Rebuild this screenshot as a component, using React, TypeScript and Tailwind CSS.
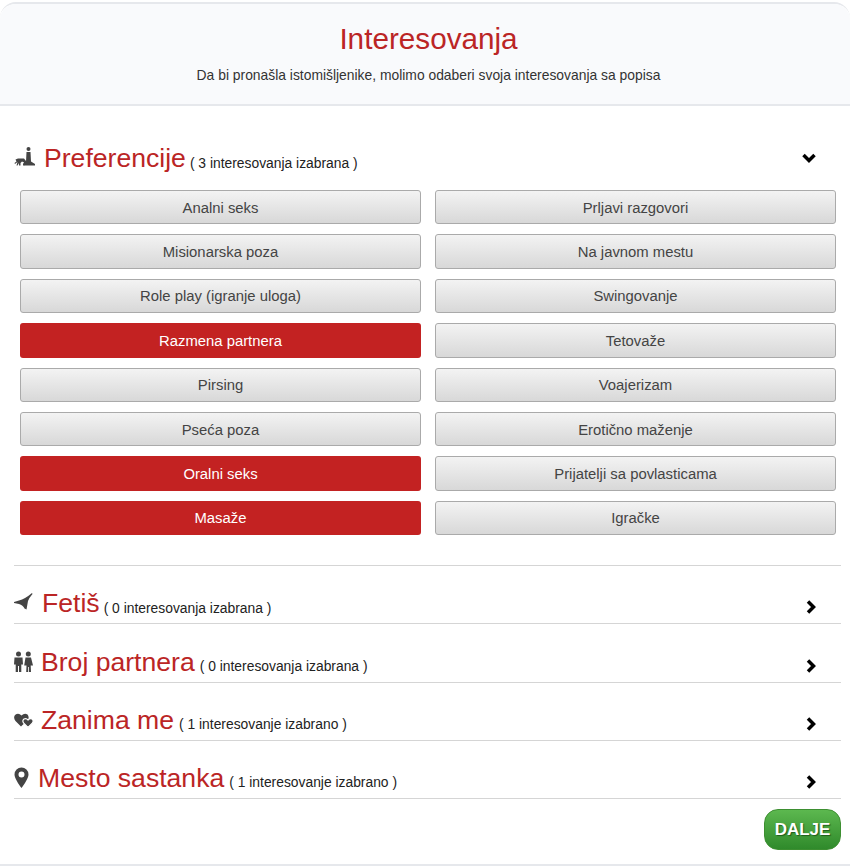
import React from 'react';

const left: [string, boolean][] = [
  ['Analni seks', false],
  ['Misionarska poza', false],
  ['Role play (igranje uloga)', false],
  ['Razmena partnera', true],
  ['Pirsing', false],
  ['Pseća poza', false],
  ['Oralni seks', true],
  ['Masaže', true],
];

const right = [
  'Prljavi razgovori',
  'Na javnom mestu',
  'Swingovanje',
  'Tetovaže',
  'Voajerizam',
  'Erotično maženje',
  'Prijatelji sa povlasticama',
  'Igračke',
];

const PoseIcon = () => (
  <svg width="22" height="22" viewBox="0 0 22 22" fill="#444">
    <circle cx="14.500" cy="3" r="2" />
    <path d="M12.500 6h4l.5 9.500 4 2.500v1.500H9v-2l3-1.500z" />
    <path d="M1.500 13.500 4 12.500h6l2 2.500v3l-2 1.500v-3L8 15.500 6.500 17v2.500H5V17l-1.500 2.500H2.500L3.500 16 1 18l-.5-1 2-1.500z" />
  </svg>
);

const HeelIcon = () => (
  <svg width="19" height="18" viewBox="0 0 19 18" fill="#444">
    <path d="M0 9 L5 7.500 Q11 6 18 0 L18.500 1 Q15 5 14 8 L12.500 16.500 L10.500 15.500 Q9 12 5 11 L0 10 Z" />
  </svg>
);

const CoupleIcon = () => (
  <svg width="19" height="22" viewBox="0 0 19 22" fill="#444">
    <circle cx="4.500" cy="3" r="2.500" />
    <circle cx="14.300" cy="3" r="2.500" />
    <path d="M.5 6.500h8l.5 7H7.300V21H5v-6H4v6H1.700v-7.500H0z" />
    <path d="M11.500 6.500h5.500l2 8h-2.300l.3 6.500h-2v-5h-.8v5h-2l.3-6.500h-2.300z" />
  </svg>
);

const HeartsIcon = () => (
  <svg width="20" height="18" viewBox="0 0 20 18" fill="#444">
    <path d="M7 15.500 L1.500 10 Q-1 6.500 1 4 Q4.500 1.500 7.500 4.500 Q10.500 1.500 13.500 3.500 Q15.500 6 14 9 L8 14.500 Z" />
    <path
      stroke="#fff"
      strokeWidth="1.200"
      d="M14 16.500 L9.500 12 Q8 9.500 10 8 Q12.500 7 14 9 Q16 7 18 8 Q20 9.500 18.500 12 Z"
    />
  </svg>
);

const PinIcon = () => (
  <svg width="15" height="22" viewBox="0 0 15 22" fill="#444">
    <path
      fillRule="evenodd"
      d="M7.500 0.500a7 7 0 0 1 7 7c0 3.500-4 9.500-7 13.500-3-4-7-10-7-13.500a7 7 0 0 1 7-7zM7.500 4.500a3 3 0 1 0 0 6 3 3 0 0 0 0-6z"
    />
  </svg>
);

const ChevronDown = () => (
  <svg width="14" height="10" viewBox="0 0 14 10" fill="none" stroke="#000" strokeWidth="3.500">
    <path d="M1.500 2 7 7.500 12.500 2" />
  </svg>
);

const ChevronRight = () => (
  <svg width="10" height="14" viewBox="0 0 10 14" fill="none" stroke="#000" strokeWidth="3.500">
    <path d="M2 1.500 7.500 7 2 12.500" />
  </svg>
);

const Chip = ({ label, active }: { label: string; active?: boolean }) => (
  <div
    className={
      active
        ? 'h-[34.4px] pt-[1px] rounded-[3px] bg-[#c32222] flex items-center justify-center text-[14.850px] text-white'
        : 'h-[34.4px] pt-[1px] rounded-[3px] border border-[#aaaaaa] bg-linear-to-b from-[#f3f3f3] to-[#d8d8d8] flex items-center justify-center text-[14.850px] text-[#444444]'
    }
  >
    {label}
  </div>
);

interface SectionProps {
  icon: React.ReactNode;
  title: string;
  count: string;
  gap: string;
  countGap?: string;
}

const Section = ({ icon, title, count, gap, countGap = 'ml-[5px]' }: SectionProps) => (
  <div className="h-[58.2px] border-b border-[#d5d5d5] flex items-end justify-between pb-[3px]">
    <div className="flex items-center">
      <span className={gap}>{icon}</span>
      <span className="text-[26.600px] leading-[34px] text-[#bb2525]">{title}</span>
      <span className={`${countGap} mt-[10px] text-[13.850px] text-[#222222]`}>( {count} )</span>
    </div>
    <span className="mr-[25px] mb-[6px]">
      <ChevronRight />
    </span>
  </div>
);

export default function App() {
  return (
    <div className="w-[850px] h-[868px] bg-white pt-[2px] font-['Liberation_Sans',Arial,sans-serif]">
      <div className="h-[864px] border-y-2 border-[#e6e8ec] rounded-t-[16px]">
        <div className="h-[102px] bg-[#f9fafc] border-b-2 border-[#e6e8ec] rounded-t-[16px] text-center pt-[17px] pl-[7px]">
          <h1 className="text-[29.700px] leading-[36px] text-[#bb2525]">Interesovanja</h1>
          <p className="mt-[9px] text-[13.870px] leading-[18px] text-[#333333]">
            Da bi pronašla istomišljenike, molimo odaberi svoja interesovanja sa popisa
          </p>
        </div>

        <div className="pl-[14px] pr-[9px]">
          <div className="pt-[20px] flex items-center justify-between h-[84px]">
            <div className="flex items-center">
              <span className="mr-[8px] mt-[-2px]">
                <PoseIcon />
              </span>
              <span className="text-[26.600px] leading-[34px] text-[#bb2525]">Preferencije</span>
              <span className="ml-[4px] mt-[10px] text-[13.850px] text-[#222222]">( 3 interesovanja izabrana )</span>
            </div>
            <span className="mr-[25px]">
              <ChevronDown />
            </span>
          </div>

          <div className="grid grid-cols-2 gap-x-[14px] gap-y-[10px] pl-[6px] pr-[5px]">
            {left.map(([label, active], i) => (
              <React.Fragment key={label}>
                <Chip label={label} active={active} />
                <Chip label={right[i]} />
              </React.Fragment>
            ))}
          </div>

          <div className="mt-[30px] border-t border-[#d5d5d5]">
            <Section icon={<HeelIcon />} title="Fetiš" count="0 interesovanja izabrana" gap="mr-[9px] mt-[-3px]" countGap="ml-[4px]" />
            <Section icon={<CoupleIcon />} title="Broj partnera" count="0 interesovanja izabrana" gap="mr-[8px]" />
            <Section icon={<HeartsIcon />} title="Zanima me" count="1 interesovanje izabrano" gap="mr-[7px]" />
            <Section icon={<PinIcon />} title="Mesto sastanka" count="1 interesovanje izabrano" gap="mr-[9px]" />
          </div>

          <div className="flex justify-end mt-[10px]">
            <div className="w-[77px] h-[41px] rounded-[14px] border border-[#3d8f31] bg-linear-to-b from-[#5cb84f] to-[#2f8a2b] flex items-center justify-center text-[17px] font-bold text-white [text-shadow:1px_1px_1px_#1f5c1b]">
              DALJE
            </div>
          </div>
        </div>
      </div>
    </div>
  );
}
